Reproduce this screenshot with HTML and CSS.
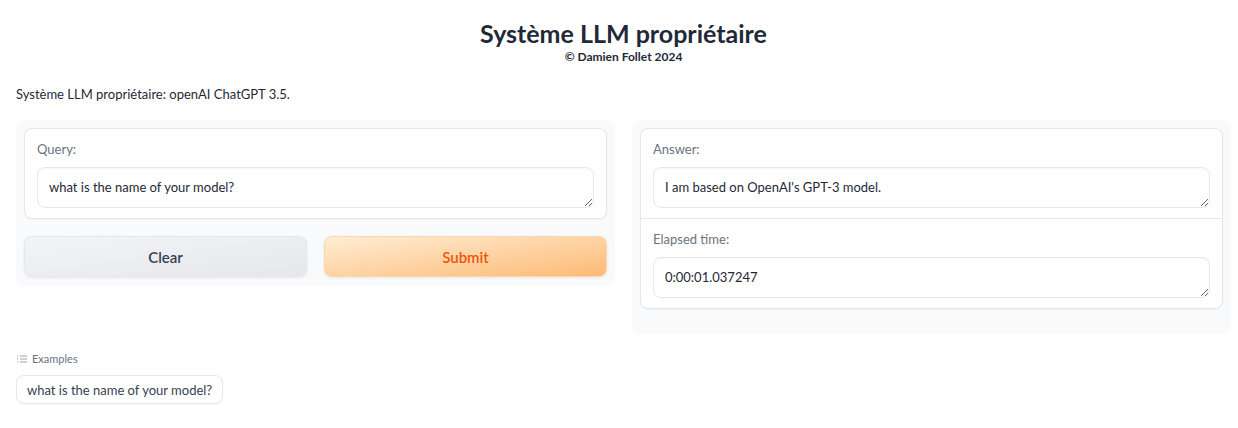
FILE: index.html
```html
<!DOCTYPE html>
<html lang="fr">
<head>
<meta charset="utf-8">
<title>Système LLM propriétaire</title>
<link rel="stylesheet" href="styles.css">
</head>
<body>
<div class="app">
  <header class="header">
    <h1 class="title">Système LLM propriétaire</h1>
    <p class="subtitle">© Damien Follet 2024</p>
  </header>
  <p class="desc">Système LLM propriétaire: openAI ChatGPT 3.5.</p>
  <div class="row">
    <div class="panel">
      <div class="block">
        <label class="label">Query:</label>
        <textarea class="input">what is the name of your model?</textarea>
      </div>
      <div class="buttons">
        <button class="btn btn-secondary">Clear</button>
        <button class="btn btn-primary">Submit</button>
      </div>
    </div>
    <div class="panel panel-out">
      <div class="block block-split">
        <div class="section">
          <label class="label">Answer:</label>
          <textarea class="input">I am based on OpenAI's GPT-3 model.</textarea>
        </div>
        <div class="section section-bordered">
          <label class="label">Elapsed time:</label>
          <textarea class="input">0:00:01.037247</textarea>
        </div>
      </div>
    </div>
  </div>
  <div class="examples">
    <div class="examples-label">
      <svg class="list-icon" width="10" height="8" viewBox="0 0 10 8" fill="none" stroke="#9ca3af" stroke-width="1">
        <path d="M0 1h1.2M0 4h1.2M0 7h1.2M3 1h7M3 4h7M3 7h7"/>
      </svg>
      <span>Examples</span>
    </div>
    <button class="example">what is the name of your model?</button>
  </div>
</div>
</body>
</html>
```
FILE: styles.css
```css
* { box-sizing: border-box; }

body {
  margin: 0;
  background: #ffffff;
  font-family: "Lato", "Noto Sans", sans-serif;
  color: #1f2937;
}

.app {
  padding: 16px 7px 16px 16px;
}

.header {
  text-align: center;
}

.title {
  margin: 0;
  font-size: 25px;
  line-height: 34px;
  font-weight: 700;
  color: #1f2937;
}

.subtitle {
  margin: 0;
  font-size: 12px;
  line-height: 14px;
  font-weight: 700;
  color: #1f2937;
}

.desc {
  margin: 20px 0 0;
  font-size: 13px;
  line-height: 20px;
  color: #1f2937;
}

.row {
  display: flex;
  gap: 17px;
  align-items: flex-start;
  margin-top: 16px;
}

.panel {
  flex: 1;
  background: #f9fafb;
  border-radius: 8px;
  padding: 8px 8px 9px;
  display: flex;
  flex-direction: column;
  gap: 17px;
}

.panel-out {
  padding-bottom: 25px;
}

.block {
  background: #ffffff;
  border: 1px solid #e5e7eb;
  border-radius: 8px;
  padding: 10px 12px;
  display: flex;
  flex-direction: column;
  box-shadow: 0 1px 2px rgba(0,0,0,0.04);
}

.block-split {
  padding: 0;
}

.section {
  padding: 10px 12px;
  display: flex;
  flex-direction: column;
}

.section-bordered {
  border-top: 1px solid #e5e7eb;
}

.label {
  font-size: 13px;
  line-height: 20px;
  color: #6b7280;
  margin-bottom: 8px;
}

.input {
  display: block;
  width: 100%;
  height: 41px;
  padding: 9px 11px;
  font-family: inherit;
  font-size: 13px;
  line-height: 21px;
  color: #1f2937;
  background: #ffffff;
  border: 1px solid #e5e7eb;
  border-radius: 8px;
  box-shadow: inset 0 1px 2px rgba(0,0,0,0.04);
  resize: vertical;
  outline: none;
}

.buttons {
  display: flex;
  gap: 17px;
}

.btn {
  flex: 1;
  height: 41px;
  border-radius: 8px;
  font-family: inherit;
  font-size: 15px;
  font-weight: 600;
  cursor: pointer;
  box-shadow: 0 1px 3px rgba(0,0,0,0.08);
}

.btn-secondary {
  background: linear-gradient(to bottom right, #f3f4f6, #e5e7eb);
  border: 1px solid #e5e7eb;
  color: #374151;
}

.btn-primary {
  background: linear-gradient(to bottom right, #ffedd5, #fdba74);
  border: 1px solid #fed7aa;
  color: #ea580c;
}

.examples {
  margin-top: 17px;
}

.examples-label {
  display: flex;
  align-items: center;
  gap: 5px;
  font-size: 11px;
  line-height: 16px;
  color: #6b7280;
  padding-left: 1px;
}

.example {
  margin-top: 8px;
  height: 29px;
  padding: 0 10px;
  background: #ffffff;
  border: 1px solid #e5e7eb;
  border-radius: 8px;
  font-family: inherit;
  font-size: 13px;
  color: #374151;
  box-shadow: 0 1px 2px rgba(0,0,0,0.04);
}
```
